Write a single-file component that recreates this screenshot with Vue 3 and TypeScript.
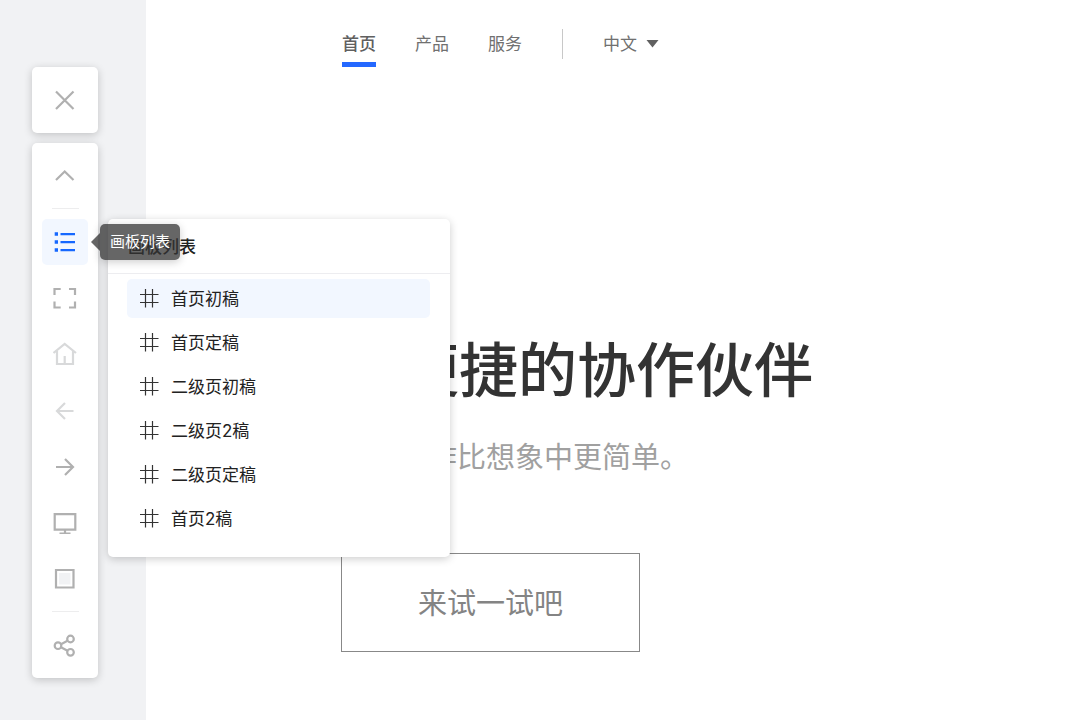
<script setup lang="ts">
import { ref } from 'vue'

interface NavLink {
  label: string
  current: boolean
}

const navLinks: NavLink[] = [
  { label: '首页', current: true },
  { label: '产品', current: false },
  { label: '服务', current: false },
]

const boards: string[] = ['首页初稿', '首页定稿', '二级页初稿', '二级页2稿', '二级页定稿', '首页2稿']
const selected = ref<number>(0)
const language = ref<string>('中文')
</script>

<template>
  <div class="shell">
    <main class="artboard">
      <header class="site-header">
        <nav class="site-nav">
          <a
            v-for="link in navLinks"
            :key="link.label"
            href="#"
            class="nav-link"
            :class="{ current: link.current }"
          >{{ link.label }}</a>
        </nav>
        <span class="nav-divider"></span>
        <div class="language">
          <select v-model="language" aria-label="语言">
            <option>中文</option>
          </select>
          <svg class="caret" width="13" height="8" viewBox="0 0 13 8" aria-hidden="true">
            <path d="M.5 0h12L6.500 7.500z" fill="#606060" />
          </svg>
        </div>
      </header>
      <section class="hero">
        <h1>更便捷的协作伙伴</h1>
        <p>团队协作比想象中更简单。</p>
        <button type="button" class="cta">来试一试吧</button>
      </section>
    </main>

    <aside class="dock">
      <div class="card">
        <button type="button" class="tool" aria-label="关闭">
          <svg viewBox="0 0 24 24"><path d="M3 3.500l17.500 17.500M20.500 3.500L3 21" /></svg>
        </button>
      </div>
      <div class="card tools">
        <button type="button" class="tool" aria-label="收起">
          <svg viewBox="0 0 24 24"><path d="M3 17l8.700-8.500 8.800 8.500" /></svg>
        </button>
        <hr />
        <div class="list-anchor">
          <button type="button" class="tool active" aria-label="画板列表">
            <svg viewBox="0 0 24 24">
              <path class="solid" d="M1.700 2.300h3.300v3.500H1.700zM1.700 10.300h3.300v3.500H1.700zM1.700 18.300h3.300v3.500H1.700z" />
              <path d="M7.500 4.200H22M7.500 12.200H22M7.500 20.200H22" />
            </svg>
          </button>
          <section class="panel">
            <h2>画板列表</h2>
            <ul>
              <li v-for="(board, index) in boards" :key="board">
                <button
                  type="button"
                  class="board"
                  :class="{ selected: selected === index }"
                  @click="selected = index"
                >
                  <svg width="20" height="20" viewBox="0 0 20 20" aria-hidden="true">
                    <path d="M6.500 1v18.500M13.500 1v18.500M1 6.500h18.500M1 14.500h18.500" />
                  </svg>
                  <span>{{ board }}</span>
                </button>
              </li>
            </ul>
          </section>
          <div class="tooltip" role="tooltip">画板列表</div>
        </div>
        <button type="button" class="tool" aria-label="全屏">
          <svg viewBox="0 0 24 24">
            <path d="M1.500 9V3h6.200M16 3h6v6M22 15.500v6h-6M7.700 21.500H1.500v-6" />
          </svg>
        </button>
        <button type="button" class="tool disabled" aria-label="主页" disabled>
          <svg viewBox="0 0 24 24">
            <path d="M.500 11L11.700 1.800 23 11M4 9v13h16V9M11.700 22v-8" />
          </svg>
        </button>
        <button type="button" class="tool disabled" aria-label="后退" disabled>
          <svg viewBox="0 0 24 24"><path d="M20.500 13H4M12 5l-8 8 8 8" /></svg>
        </button>
        <button type="button" class="tool" aria-label="前进">
          <svg viewBox="0 0 24 24"><path d="M3 13h17M12 5l8 8-8 8" /></svg>
        </button>
        <button type="button" class="tool" aria-label="预览设备">
          <svg viewBox="0 0 24 24"><path d="M1.700 4.200h20.600v15.500H1.700zM12 19.500V23M6.500 23.500h11" /></svg>
        </button>
        <button type="button" class="tool" aria-label="背景">
          <svg viewBox="0 0 24 24">
            <path d="M6 7h11.500v11.500H6z" fill="#f1f2f4" stroke="none" />
            <path d="M3 4h17.500v17.500H3z" />
          </svg>
        </button>
        <hr />
        <button type="button" class="tool" aria-label="分享">
          <svg viewBox="0 0 24 24">
            <circle cx="5" cy="12.700" r="3.300" />
            <circle cx="17.500" cy="6" r="3.300" />
            <circle cx="17.500" cy="19.300" r="3.300" />
            <path d="M8 11.200l6.500-3.500M8 14.200l6.500 3.500" />
          </svg>
        </button>
      </div>
    </aside>
  </div>
</template>

<style>
body {
  margin: 0;
}
</style>

<style scoped>
.shell {
  position: relative;
  min-height: 100vh;
  padding-left: 146px;
  box-sizing: border-box;
  display: flex;
  background: #f1f2f4;
  font-family: Inter, "Noto Sans CJK SC", sans-serif;
  overflow: hidden;
}

button,
select {
  font-family: inherit;
  margin: 0;
}

.artboard {
  flex: 1;
  min-width: 0;
  background: #fff;
}

.site-header {
  display: flex;
  align-items: flex-start;
  gap: 39px;
  padding: 29px 24px 0 196px;
  font-size: 17px;
  line-height: 30px;
  color: #707070;
}

.site-nav {
  display: flex;
  gap: 39px;
}

.nav-link {
  color: inherit;
  text-decoration: none;
  padding-bottom: 3px;
  border-bottom: 5px solid transparent;
}

.nav-link.current {
  font-weight: 500;
  color: #606060;
  border-bottom-color: #2468ff;
}

.nav-divider {
  width: 1px;
  height: 30px;
  margin: 0 1px;
  background: #c8c8c8;
}

.language {
  display: flex;
  align-items: center;
  gap: 9px;
}

.language select {
  appearance: none;
  border: 0;
  padding: 0;
  height: 30px;
  font-size: 17px;
  color: inherit;
  background: transparent;
}

.caret {
  pointer-events: none;
}

.hero {
  padding: 268px 24px 68px 195px;
}

.hero h1 {
  margin: 0;
  font-size: 59px;
  line-height: 72px;
  font-weight: 500;
  color: #333;
  white-space: nowrap;
}

.hero p {
  margin: 31px 0 0;
  font-size: 29px;
  line-height: 40px;
  font-weight: 400;
  color: #a0a0a0;
  white-space: nowrap;
}

.cta {
  margin-top: 75px;
  padding: 29px 76px 27px;
  border: 1px solid #888;
  background: #fff;
  font-size: 29px;
  line-height: 41px;
  font-weight: 400;
  color: #848484;
}

.dock {
  position: absolute;
  left: 32px;
  top: 67px;
  display: flex;
  flex-direction: column;
  gap: 10px;
}

.card {
  padding: 10px;
  border-radius: 5px;
  background: #fff;
  box-shadow: 0 2px 8px rgba(0, 0, 0, 0.2);
}

.tools {
  display: flex;
  flex-direction: column;
  gap: 10px;
  padding-top: 9px;
}

.tool {
  display: flex;
  align-items: center;
  justify-content: center;
  width: 46px;
  height: 46px;
  padding: 0;
  border: 0;
  border-radius: 5px;
  background: transparent;
  color: #b0b0b0;
}

.tool svg {
  width: 24px;
  height: 24px;
  fill: none;
  stroke: currentColor;
  stroke-width: 2.2;
}

.tool .solid {
  fill: currentColor;
  stroke: none;
}

.tool.active {
  background: #f2f7ff;
  color: #1668ff;
}

.tool.disabled {
  color: #d8d9da;
}

hr {
  width: 27px;
  height: 1px;
  margin: 0 auto;
  border: 0;
  background: #ededee;
}

.list-anchor {
  position: relative;
}

.panel {
  position: absolute;
  left: 66px;
  top: 0;
  width: 342px;
  padding-bottom: 19px;
  border-radius: 5px;
  background: #fff;
  box-shadow: 0 2px 8px rgba(0, 0, 0, 0.2);
}

.panel h2 {
  margin: 0;
  padding: 2px 20px 0;
  border-bottom: 1px solid #ededf0;
  font-size: 17px;
  line-height: 52px;
  font-weight: 500;
  color: #222;
}

.panel ul {
  display: flex;
  flex-direction: column;
  gap: 5px;
  margin: 0;
  padding: 5px 20px 0 19px;
  list-style: none;
}

.board {
  display: flex;
  align-items: center;
  gap: 12px;
  width: 100%;
  height: 39px;
  padding: 0 12px 2px;
  border: 0;
  border-radius: 5px;
  background: transparent;
  color: #222;
  font-size: 17px;
  text-align: left;
}

.board.selected {
  background: #f2f7ff;
}

.board svg {
  fill: none;
  stroke: #333;
  stroke-width: 1.2;
}

.tooltip {
  position: absolute;
  left: 58px;
  top: 5px;
  padding: 0 10px;
  border-radius: 5px;
  background: rgba(51, 51, 51, 0.75);
  box-shadow: 0 2px 8px rgba(0, 0, 0, 0.2);
  font-size: 15px;
  line-height: 36px;
  color: #fff;
  white-space: nowrap;
}

.tooltip::before {
  content: "";
  position: absolute;
  right: 100%;
  top: 9px;
  border: 9px solid transparent;
  border-left-width: 0;
  border-right-color: rgba(51, 51, 51, 0.75);
}
</style>
